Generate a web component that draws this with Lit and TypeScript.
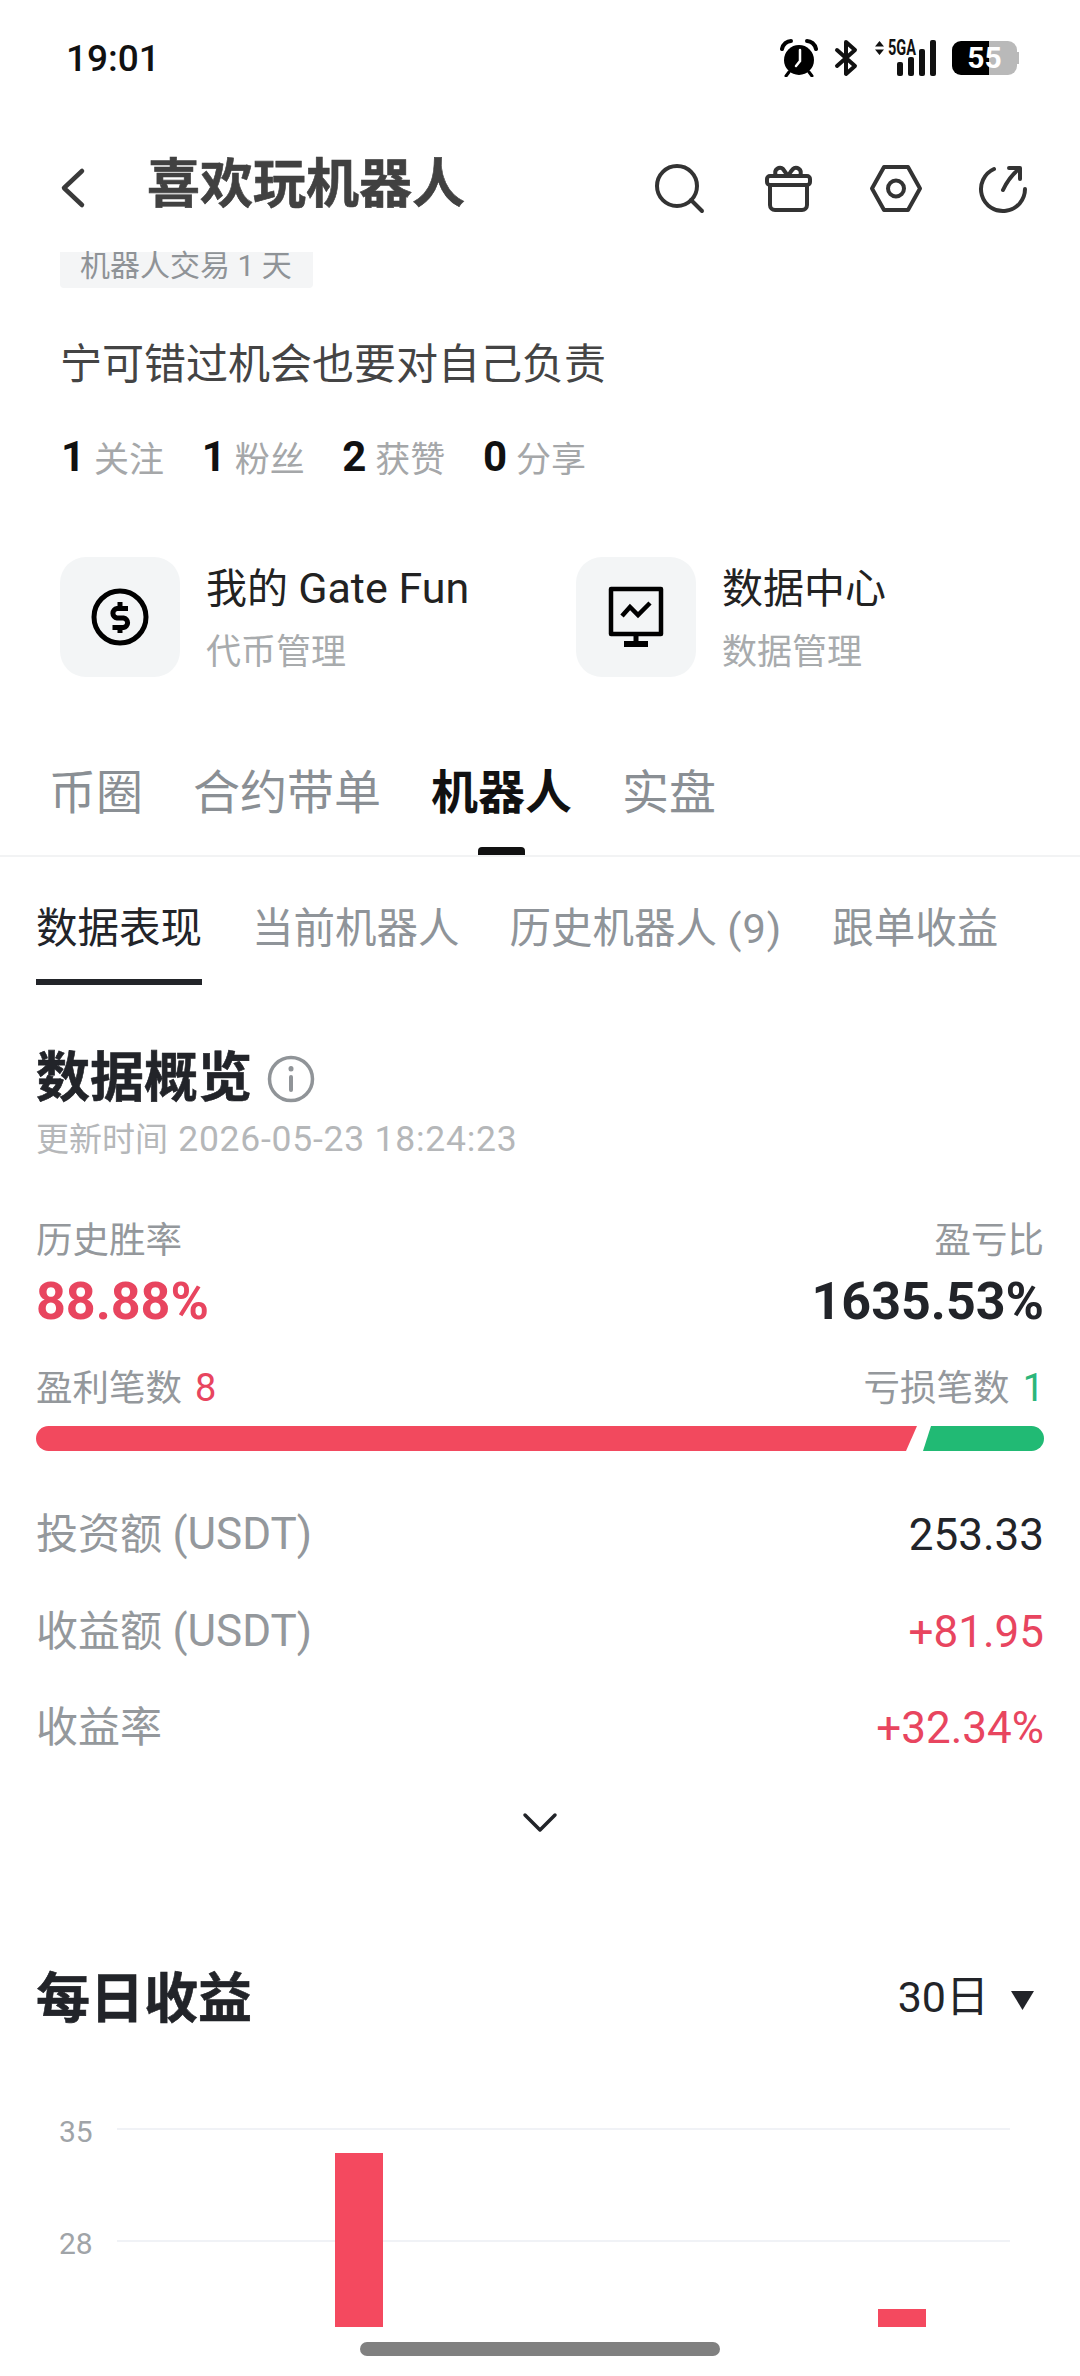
import { LitElement, html, css, svg } from "lit";
import { customElement } from "lit/decorators.js";

const bars = [
  { left: 299, width: 48, height: 174 },
  { left: 842, width: 48, height: 18 },
];

@customElement("app-root")
export class AppRoot extends LitElement {
  static styles = css`
    :host {
      display: block;
      position: relative;
      width: 1080px;
      height: 2376px;
      overflow: hidden;
      background: #fff;
      font-family: Roboto, "Noto Sans CJK SC", sans-serif;
      color: #222429;
    }
    svg { display: block; flex: none; }
    .status {
      height: 116px;
      display: flex;
      align-items: center;
      justify-content: space-between;
      padding: 0 63px 0 66px;
    }
    .time { font-size: 37px; font-weight: 500; color: #111; }
    .sys { display: flex; align-items: center; gap: 16px; }
    .signal { position: relative; width: 62px; height: 36px; }
    .arrows { position: absolute; left: 0; top: 1px; }
    .fiveg {
      position: absolute;
      left: 14px;
      top: -1px;
      font-size: 22px;
      line-height: 18px;
      font-weight: 700;
      color: #111;
      transform: scaleX(0.66);
      transform-origin: left top;
    }
    .sbars { position: absolute; right: 0; bottom: 0; display: flex; align-items: flex-end; gap: 5px; }
    .sbars i { display: block; width: 6px; background: #111; border-radius: 2px; }
    .battery {
      position: relative;
      width: 65px;
      height: 34px;
      border-radius: 9px;
      background: linear-gradient(90deg, #000 57%, #b9b9b9 57%);
      color: #fff;
      font-size: 30px;
      font-weight: 700;
      line-height: 34px;
      text-align: center;
    }
    .battery::after {
      content: "";
      position: absolute;
      right: -2px;
      top: 11px;
      width: 2px;
      height: 12px;
      background: #b9b9b9;
    }
    .nav {
      height: 136px;
      display: flex;
      align-items: center;
      padding: 0 48px 0 58px;
    }
    .back { margin-top: 8px; }
    .title {
      margin-left: 59px;
      font-size: 53px;
      font-weight: 700;
      line-height: 64px;
      color: #414141;
      flex: 1;
      margin-top: 2px;
      -webkit-text-stroke: 0.6px #414141;
    }
    .nav-icons { display: flex; gap: 52px; margin-top: 10px; }
    .chip-row { height: 36px; display: flex; padding-left: 60px; }
    .chip {
      height: 36px;
      box-sizing: border-box;
      padding: 0 21px 8px 20px;
      background: #f4f5f6;
      border-radius: 0 0 4px 4px;
      font-size: 30px;
      line-height: 28px;
      color: #8f9397;
    }
    .bio { margin: 51px 0 0 60px; font-size: 42px; line-height: 52px; color: #444; }
    .stats { display: flex; margin: 40px 0 0 61px; height: 50px; align-items: center; gap: 37.5px; }
    .stat { display: flex; align-items: center; gap: 9px; }
    .stat b { font-size: 42px; font-weight: 700; color: #111; }
    .stat span { font-size: 35px; color: #a5a7a9; }
    .cards { display: grid; grid-template-columns: 516px 1fr; margin: 76px 0 0 60px; }
    .card { display: flex; gap: 26px; }
    .ico {
      width: 120px;
      height: 120px;
      border-radius: 26px;
      background: #f3f5f6;
      display: flex;
      align-items: center;
      justify-content: center;
      flex: none;
    }
    .card-t { margin-top: 6px; font-size: 41px; line-height: 52px; color: #222; }
    .card-t span { font-size: 43px; line-height: 0; }
    .card-s { margin-top: 14px; font-size: 35px; line-height: 48px; color: #a8abad; }
    .tabs {
      display: flex;
      gap: 50px;
      padding: 86px 0 0 49px;
      border-bottom: 2px solid #f2f3f4;
    }
    .tab { display: flex; flex-direction: column; align-items: center; }
    .tab span { font-size: 47px; line-height: 60px; color: #8a8f94; }
    .tab i { display: block; width: 47px; height: 8px; margin-top: 24px; border-radius: 4px 4px 0 0; }
    .tab.on span { color: #111; font-weight: 700; }
    .tab.on i { background: #111; }
    .sub { display: flex; gap: 50px; padding: 44px 0 0 36px; }
    .subtab { display: flex; flex-direction: column; }
    .subtab > span { font-size: 41.5px; line-height: 56px; color: #8f9499; white-space: nowrap; }
    .subtab em { font-style: normal; letter-spacing: 1px; }
    .subtab i { display: block; height: 6px; margin-top: 22px; }
    .subtab.on > span { color: #222429; }
    .subtab.on i { background: #222429; }
    .body { padding: 0 36px; }
    .h {
      font-size: 54px;
      line-height: 64px;
      font-weight: 700;
      color: #222429;
      -webkit-text-stroke: 0.6px #222429;
    }
    .h-row { display: flex; align-items: center; gap: 15px; margin-top: 62px; }
    .upd { margin-top: 7px; height: 44px; font-size: 33px; line-height: 44px; color: #b5b7b9; }
    .upd span { margin-left: 2px; font-size: 35.5px; letter-spacing: 0.75px; line-height: 0; }
    .split { display: flex; justify-content: space-between; }
    .lbl { font-size: 36.5px; line-height: 48px; height: 48px; color: #94989c; }
    .lbl em { font-style: normal; font-size: 38px; margin-left: 4px; line-height: 0; }
    .big { font-size: 52px; line-height: 60px; height: 60px; font-weight: 700; color: #222429; }
    .red { color: #e8455f; }
    .grn { color: #2bb67b; }
    .mt55 { margin-top: 55px; }
    .mt7 { margin-top: 7px; }
    .mt33 { margin-top: 33px; }
    .bar { display: flex; gap: 6px; margin-top: 13px; height: 25px; }
    .bar-r {
      width: 881px;
      background: #f2495e;
      border-radius: 13px 0 0 13px;
      clip-path: polygon(0 0, 100% 0, calc(100% - 11px) 100%, 0 100%);
    }
    .bar-g {
      flex: 1;
      background: #21ba74;
      border-radius: 0 13px 13px 0;
      clip-path: polygon(8px 0, 100% 0, 100% 100%, 0 100%);
    }
    .rows { display: flex; flex-direction: column; gap: 36.5px; margin-top: 54px; }
    .row { height: 60px; display: flex; align-items: center; justify-content: space-between; }
    .row .k { font-size: 42px; line-height: 56px; color: #94989c; }
    .row .k span { font-size: 44px; line-height: 0; }
    .row .v { font-size: 44px; line-height: 56px; color: #222429; }
    .row .v.red { color: #e8455f; }
    .more { display: flex; justify-content: center; margin-top: 45px; }
    .daily { display: flex; align-items: center; justify-content: space-between; margin-top: 125px; }
    .range { display: flex; align-items: center; gap: 21px; padding-right: 9px; font-size: 43px; color: #222429; }
    .range span { line-height: 50px; margin-bottom: 6px; }
    .chart { position: relative; height: 218px; margin-top: 77px; }
    .gl { display: flex; align-items: center; height: 40px; margin-bottom: 72px; padding: 0 34px 0 23px; }
    .gl span { width: 58px; font-size: 30px; color: #a0a4a8; position: relative; top: 2px; }
    .gl i { flex: 1; height: 2px; background: #f0f2f6; display: block; }
    .cb { position: absolute; bottom: 0; background: #f4495f; }
    .home {
      position: absolute;
      left: 360px;
      top: 2342px;
      width: 360px;
      height: 14px;
      border-radius: 7px;
      background: #808080;
    }
  `;

  private line(d: any, w = 56, h = 56, sw = 4, c = "#333") {
    return html`<svg width=${w} height=${h} viewBox="0 0 ${w} ${h}" fill="none" stroke=${c} stroke-width=${sw} stroke-linecap="round" stroke-linejoin="round">${d}</svg>`;
  }

  render() {
    return html`
      <div class="status">
        <div class="time">19:01</div>
        <div class="sys">
          <svg width="38" height="38" viewBox="0 0 38 38">
            <circle cx="19" cy="21" r="15" fill="#000"/>
            <path d="M2 10C3 5 7 2 11 2M36 10C35 5 31 2 27 2" fill="none" stroke="#000" stroke-width="4" stroke-linecap="round"/>
            <path d="M9 33l-3 4M29 33l3 4" stroke="#000" stroke-width="3" stroke-linecap="round"/>
            <path d="M20 11v11l-4 5" fill="none" stroke="#fff" stroke-width="2.5" stroke-linecap="round"/>
          </svg>
          <svg width="24" height="38" viewBox="0 0 24 38" fill="none" stroke="#111" stroke-width="4" stroke-linejoin="round" stroke-linecap="round">
            <path d="M3 11L21 27L12 35V3L21 11L3 27"/>
          </svg>
          <div class="signal">
            <svg class="arrows" width="11" height="14" viewBox="0 0 11 14" fill="#111"><path d="M5.500 0L10 5.500H1zM5.500 14L1 8.500H10z"/></svg>
            <div class="fiveg">5GA</div>
            <div class="sbars">
              <i style="height:14px"></i><i style="height:19px"></i><i style="height:27px"></i><i style="height:36px"></i>
            </div>
          </div>
          <div class="battery">55</div>
        </div>
      </div>

      <div class="nav">
        <div class="back">${this.line(svg`<path d="M24 6L6 23L24 40"/>`, 30, 46, 4.5, "#3a3a3a")}</div>
        <div class="title">喜欢玩机器人</div>
        <div class="nav-icons">
          ${this.line(svg`<circle cx="25" cy="25" r="20"/><path d="M39 39L50 50"/>`)}
          ${this.line(svg`<rect x="7" y="15" width="43" height="9" rx="3"/><path d="M10 24V44a5 5 0 0 0 5 5H42a5 5 0 0 0 5-5V24"/><path d="M16 15c-3-7 4-10 7-7l5 7c2-3 3-5 5-7 3-3 10 0 7 7"/>`)}
          ${this.line(svg`<path d="M16 6H40L52 27.500L40 49H16L4 27.500Z"/><circle cx="28" cy="27.500" r="8"/>`)}
          ${this.line(svg`<path d="M18 8A22 22 0 1 0 49 28"/><path d="M27 29Q33 16 43 8"/><path d="M33 7H44V18"/>`)}
        </div>
      </div>

      <div class="chip-row"><div class="chip">机器人交易 1 天</div></div>
      <div class="bio">宁可错过机会也要对自己负责</div>

      <div class="stats">
        <div class="stat"><b>1</b><span>关注</span></div>
        <div class="stat"><b>1</b><span>粉丝</span></div>
        <div class="stat"><b>2</b><span>获赞</span></div>
        <div class="stat"><b>0</b><span>分享</span></div>
      </div>

      <div class="cards">
        <div class="card">
          <div class="ico">
            ${this.line(svg`<circle cx="32" cy="32" r="26"/><path d="M40 23.500H29a4.800 4.800 0 0 0 0 9.500h6.500a4.800 4.800 0 0 1 0 9.500H24.500" stroke-linecap="butt"/><path d="M32 17V23M32 43V48" stroke-linecap="butt"/>`, 64, 64, 5, "#000")}
          </div>
          <div>
            <div class="card-t">我的 <span>Gate Fun</span></div>
            <div class="card-s">代币管理</div>
          </div>
        </div>
        <div class="card">
          <div class="ico">
            <svg width="56" height="62" viewBox="0 0 56 62" fill="none" stroke="#000">
              <rect x="3" y="3" width="50" height="45" stroke-width="4.500" stroke-linejoin="round"/>
              <path d="M14 30L22 21L30 29L42 17" stroke-width="4.500" stroke-linejoin="miter"/>
              <path d="M28 48V56" stroke-width="5"/>
              <path d="M16 58H40" stroke-width="6"/>
            </svg>
          </div>
          <div>
            <div class="card-t">数据中心</div>
            <div class="card-s">数据管理</div>
          </div>
        </div>
      </div>

      <div class="tabs">
        <div class="tab"><span>币圈</span><i></i></div>
        <div class="tab"><span>合约带单</span><i></i></div>
        <div class="tab on"><span>机器人</span><i></i></div>
        <div class="tab"><span>实盘</span><i></i></div>
      </div>

      <div class="sub">
        <div class="subtab on"><span>数据表现</span><i></i></div>
        <div class="subtab"><span>当前机器人</span><i></i></div>
        <div class="subtab"><span>历史机器人 <em>(9)</em></span><i></i></div>
        <div class="subtab"><span>跟单收益</span><i></i></div>
      </div>

      <div class="body">
        <div class="h-row">
          <div class="h">数据概览</div>
          ${this.line(svg`<circle cx="24" cy="24" r="21.500"/><path d="M24 22V35" stroke-width="4"/><path d="M24 13.500V14" stroke-width="5"/>`, 48, 48, 3.5, "#909498")}
        </div>
        <div class="upd">更新时间 <span>2026-05-23 18:24:23</span></div>

        <div class="split mt55 lbl"><span>历史胜率</span><span>盈亏比</span></div>
        <div class="split mt7 big"><span class="red">88.88%</span><span>1635.53%</span></div>
        <div class="split mt33 lbl"><span>盈利笔数 <em class="red">8</em></span><span>亏损笔数 <em class="grn">1</em></span></div>
        <div class="bar"><div class="bar-r"></div><div class="bar-g"></div></div>

        <div class="rows">
          <div class="row"><span class="k">投资额 <span>(USDT)</span></span><span class="v">253.33</span></div>
          <div class="row"><span class="k">收益额 <span>(USDT)</span></span><span class="v red">+81.95</span></div>
          <div class="row"><span class="k">收益率</span><span class="v red">+32.34%</span></div>
        </div>

        <div class="more">
          ${this.line(svg`<path d="M4 12L19 27L34 12"/>`, 38, 40, 3.5, "#222429")}
        </div>

        <div class="daily">
          <div class="h">每日收益</div>
          <div class="range">
            <span>30日</span>
            <svg width="25" height="20" viewBox="0 0 25 20" fill="#222429"><path d="M1 1H24L12.500 20Z"/></svg>
          </div>
        </div>

        <div class="chart">
          <div class="gl"><span>35</span><i></i></div>
          <div class="gl"><span>28</span><i></i></div>
          ${bars.map(
            (b) => html`<div class="cb" style="left:${b.left}px;width:${b.width}px;height:${b.height}px"></div>`
          )}
        </div>
      </div>

      <div class="home"></div>
    `;
  }
}
